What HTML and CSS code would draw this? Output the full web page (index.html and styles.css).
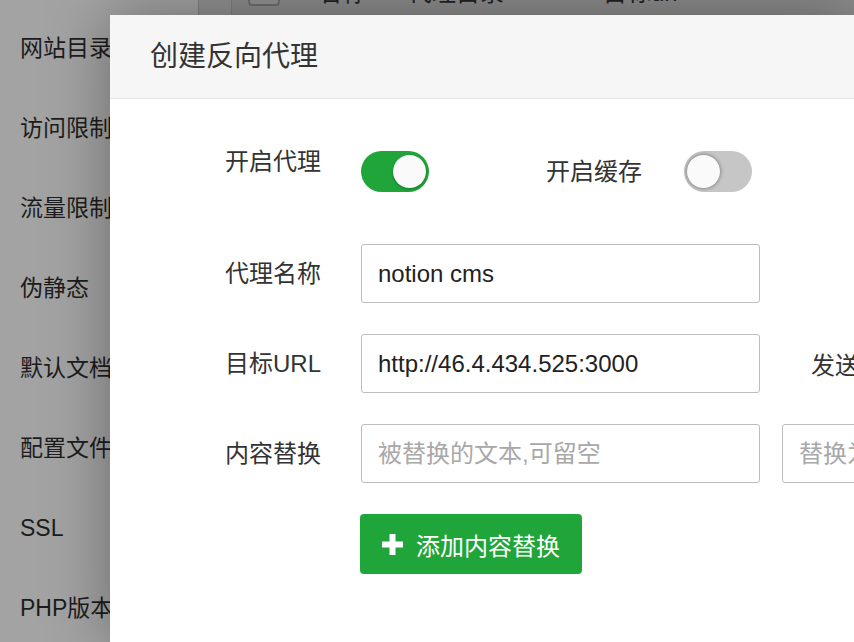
FILE: index.html
```html
<!DOCTYPE html>
<html lang="zh">
<head>
<meta charset="utf-8">
<title>创建反向代理</title>
<link rel="stylesheet" href="styles.css">
</head>
<body>
<div class="page">
  <aside class="side">
    <div class="side-item">网站目录</div>
    <div class="side-item">访问限制</div>
    <div class="side-item">流量限制</div>
    <div class="side-item">伪静态</div>
    <div class="side-item">默认文档</div>
    <div class="side-item">配置文件</div>
    <div class="side-item">SSL</div>
    <div class="side-item">PHP版本</div>
  </aside>
  <div class="gutter"></div>
  <main class="main">
    <div class="thead">
      <span class="chk"></span>
      <span class="th th-name">名称</span>
      <span class="th th-dir">代理目录</span>
      <span class="th th-url">目标url</span>
    </div>
  </main>
</div>

<div class="modal">
  <div class="modal-head">创建反向代理</div>
  <div class="modal-body">
    <div class="row row-switch">
      <label class="lbl lbl-top">开启代理</label>
      <span class="switch on"><i></i></span>
      <label class="lbl-inline">开启缓存</label>
      <span class="switch"><i></i></span>
    </div>
    <div class="row">
      <label class="lbl">代理名称</label>
      <input class="field" type="text" value="notion cms">
    </div>
    <div class="row">
      <label class="lbl">目标URL</label>
      <input class="field" type="text" value="http://46.4.434.525:3000">
      <span class="after">发送域名</span>
    </div>
    <div class="row">
      <label class="lbl">内容替换</label>
      <input class="field" type="text" placeholder="被替换的文本,可留空">
      <input class="field field-2" type="text" placeholder="替换为的文本">
    </div>
    <div class="row">
      <span class="spacer"></span>
      <button class="btn" type="button">
        <svg class="plus" width="21" height="21" viewBox="0 0 21 21"><path d="M7.5 0h6v7.5H21v6h-7.5V21h-6v-7.5H0v-6h7.5z" fill="#fff"/></svg>
        <span>添加内容替换</span>
      </button>
    </div>
  </div>
</div>
</body>
</html>
```

FILE: styles.css
```css
* { box-sizing: border-box; }
html, body { margin: 0; padding: 0; }
body {
  width: 854px;
  height: 642px;
  overflow: hidden;
  position: relative;
  font-family: "Liberation Sans", "Noto Sans CJK SC", sans-serif;
  background: #8c8c8c;
}

.page {
  display: flex;
  height: 642px;
}

.side {
  width: 198px;
  flex: none;
  background: #a3a3a3;
  padding-top: 8px;
}
.side-item {
  height: 80px;
  line-height: 80px;
  padding-left: 20px;
  font-size: 23px;
  color: #1c1c1c;
  white-space: nowrap;
}

.gutter {
  width: 34px;
  flex: none;
  background: #929292;
  border-left: 1px solid #7f7f7f;
  border-right: 1px solid #7f7f7f;
}

.main {
  flex: 1;
  background: #8c8c8c;
  overflow: hidden;
}
.thead {
  position: relative;
  height: 40px;
  margin-top: -27px;
  display: flex;
  align-items: center;
  font-size: 24px;
  color: #222;
}
.chk {
  width: 32px;
  height: 26px;
  margin-left: 16px;
  border: 2px solid #6e6e6e;
  border-radius: 4px;
  background: #939393;
}
.th { position: absolute; line-height: 40px; top: 0; white-space: nowrap; }
.th-name { left: 86px; }
.th-dir { left: 176px; }
.th-url { left: 371px; }

.modal {
  position: absolute;
  left: 110px;
  top: 15px;
  right: 0;
  bottom: 0;
  overflow: hidden;
  background: #fff;
  box-shadow: 0 0 60px rgba(0, 0, 0, 0.35);
}
.modal-head {
  height: 84px;
  line-height: 83px;
  padding-left: 40px;
  font-size: 28px;
  color: #333;
  background: #f6f6f6;
  border-bottom: 1px solid #e6e6e6;
}
.modal-body {
  padding-top: 52px;
}
.row {
  display: flex;
  align-items: center;
  margin-bottom: 31px;
}
.row-switch {
  margin-bottom: 52px;
  align-items: flex-start;
}
.lbl {
  width: 251px;
  flex: none;
  padding-right: 40px;
  text-align: right;
  font-size: 24px;
  line-height: 24px;
  color: #333;
}
.lbl-top { margin-top: -1px; }
.lbl-inline {
  margin-left: 117px;
  margin-right: 42px;
  font-size: 24px;
  line-height: 41px;
  color: #333;
  flex: none;
}
.spacer { width: 250px; flex: none; }

.switch {
  position: relative;
  display: block;
  width: 68px;
  height: 41px;
  border-radius: 21px;
  background: #c6c6c6;
  flex: none;
}
.switch i {
  position: absolute;
  top: 4px;
  left: 3px;
  width: 33px;
  height: 33px;
  border-radius: 50%;
  background: #fafafa;
  box-shadow: 0 0 4px rgba(0, 0, 0, 0.45);
}
.switch.on { background: #20a53a; }
.switch.on i {
  left: auto;
  right: 3px;
  box-shadow: 0 1px 3px rgba(0, 0, 0, 0.3);
}

.field {
  width: 399px;
  height: 59px;
  flex: none;
  padding: 0 16px;
  border: 1px solid #bdbdbd;
  border-radius: 3px;
  font-family: "Liberation Sans", "Noto Sans CJK SC", sans-serif;
  font-size: 24px;
  color: #222;
  background: #fff;
  outline: none;
}
.field::placeholder { color: #a8a8a8; }
.field-2 { margin-left: 22px; }
.after {
  margin-left: 51px;
  font-size: 24px;
  color: #333;
  white-space: nowrap;
  flex: none;
}

.btn {
  display: flex;
  align-items: center;
  width: 222px;
  height: 60px;
  padding: 0 0 0 22px;
  border: none;
  border-radius: 4px;
  background: #20a53a;
  color: #fff;
  font-family: "Liberation Sans", "Noto Sans CJK SC", sans-serif;
  font-size: 24px;
  cursor: pointer;
  flex: none;
}
.plus { margin-right: 13px; flex: none; }
```
